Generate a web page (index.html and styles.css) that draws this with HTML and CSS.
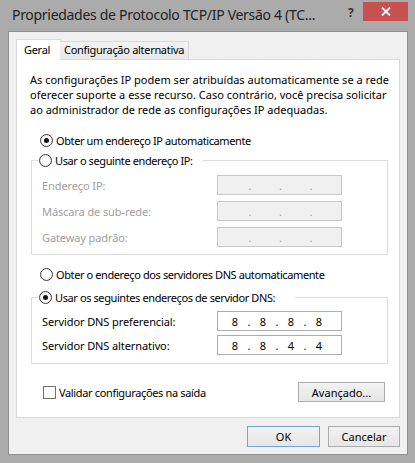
FILE: index.html
```html
<!DOCTYPE html>
<html lang="pt-BR">
<head>
<meta charset="utf-8">
<title>Propriedades de Protocolo TCP/IP Versão 4</title>
<link rel="stylesheet" href="styles.css">
</head>
<body>
<div class="window">
  <div class="titlebar">
    <div class="title">Propriedades de Protocolo TCP/IP Versão 4 (TC...</div>
    <div class="help">?</div>
    <div class="close">
      <svg width="10" height="9" viewBox="0 0 10 9"><path d="M1 0.5 L9 8.5 M9 0.5 L1 8.5" stroke="#fff" stroke-width="1.8" fill="none"/></svg>
    </div>
  </div>
  <div class="client">
    <div class="tabs">
      <div class="tab active">Geral</div>
      <div class="tab">Configuração alternativa</div>
    </div>
    <div class="panel">
      <p class="desc">As configurações IP podem ser atribuídas automaticamente se a rede<br>oferecer suporte a esse recurso. Caso contrário, você precisa solicitar<br>ao administrador de rede as configurações IP adequadas.</p>

      <div class="radio r-top"><span class="rb checked"></span><span>Obter um endereço IP automaticamente</span></div>

      <fieldset class="group g1">
        <legend><span class="radio"><span class="rb"></span><span>Usar o seguinte endereço IP:</span></span></legend>
        <div class="row"><span class="lbl disabled">Endereço IP:</span><div class="ip off"><span class="f"></span><span class="d">.</span><span class="f"></span><span class="d">.</span><span class="f"></span><span class="d">.</span><span class="f"></span></div></div>
        <div class="row"><span class="lbl disabled">Máscara de sub-rede:</span><div class="ip off"><span class="f"></span><span class="d">.</span><span class="f"></span><span class="d">.</span><span class="f"></span><span class="d">.</span><span class="f"></span></div></div>
        <div class="row"><span class="lbl disabled">Gateway padrão:</span><div class="ip off"><span class="f"></span><span class="d">.</span><span class="f"></span><span class="d">.</span><span class="f"></span><span class="d">.</span><span class="f"></span></div></div>
      </fieldset>

      <div class="radio r-dns"><span class="rb"></span><span>Obter o endereço dos servidores DNS automaticamente</span></div>

      <fieldset class="group g2">
        <legend><span class="radio"><span class="rb checked"></span><span>Usar os seguintes endereços de servidor DNS:</span></span></legend>
        <div class="row"><span class="lbl">Servidor DNS preferencial:</span><div class="ip"><span class="f">8</span><span class="d">.</span><span class="f">8</span><span class="d">.</span><span class="f">8</span><span class="d">.</span><span class="f">8</span></div></div>
        <div class="row"><span class="lbl">Servidor DNS alternativo:</span><div class="ip"><span class="f">8</span><span class="d">.</span><span class="f">8</span><span class="d">.</span><span class="f">4</span><span class="d">.</span><span class="f">4</span></div></div>
      </fieldset>

      <div class="bottom">
        <div class="check"><span class="cb"></span><span>Validar configurações na saída</span></div>
        <div class="btn adv">Avançado...</div>
      </div>
    </div>
    <div class="actions">
      <div class="btn ok">OK</div>
      <div class="btn cancel">Cancelar</div>
    </div>
  </div>
</div>
</body>
</html>
```

FILE: styles.css
```css
* { box-sizing: border-box; }
html, body { margin: 0; padding: 0; }
body {
  width: 415px;
  height: 463px;
  overflow: hidden;
  background: #ababab;
  font-family: "Noto Sans", "Open Sans", sans-serif;
  font-size: 11px;
  color: #000;
}
.window {
  width: 415px;
  height: 463px;
  background: #ababab;
  display: flex;
  flex-direction: column;
}
.titlebar {
  height: 31px;
  display: flex;
  align-items: flex-start;
}
.title {
  flex: 1;
  padding: 5px 0 0 12px;
  font-size: 14px;
  line-height: 20px;
  letter-spacing: -0.3px;
  color: #222;
  white-space: nowrap;
}
.help {
  margin-top: 5px;
  width: 10px;
  font-size: 12px;
  font-weight: bold;
  line-height: 16px;
  color: #333;
}
.close {
  width: 45px;
  height: 19px;
  margin: 2px 7px 0 5px;
  background: #c75050;
  display: flex;
  align-items: center;
  justify-content: center;
}
.client {
  flex: 1;
  margin: 0 7px 8px 8px;
  background: #f0f0f0;
  border: 1px solid #8f8f8f;
  padding: 7px 7px 7px 7px;
  display: flex;
  flex-direction: column;
}
.tabs {
  height: 20px;
  display: flex;
  align-items: flex-end;
  position: relative;
  z-index: 1;
  letter-spacing: -0.3px;
}
.tab {
  height: 18px;
  border: 1px solid #d9d9d9;
  border-bottom: none;
  background: linear-gradient(#f3f3f3, #e8e8e8);
  line-height: 16px;
  padding-left: 4px;
  white-space: nowrap;
}
.tab.active {
  width: 45px;
  height: 21px;
  margin-bottom: -1px;
  background: #fff;
  padding-left: 7px;
  line-height: 19px;
}
.tab:not(.active) {
  width: 129px;
  margin-left: -1px;
  border-left: none;
}
.panel {
  height: 359px;
  background: #fff;
  border: 1px solid #d9d9d9;
  padding: 12px 11px 0 13px;
}
.desc {
  margin: 0;
  line-height: 15px;
  white-space: nowrap;
}
.radio {
  display: flex;
  align-items: center;
  height: 16px;
  gap: 3px;
  white-space: nowrap;
  letter-spacing: -0.4px;
}
.r-top { margin: 15px 0 0 10px; }
.r-dns { margin: 11px 0 0 10px; }
.rb {
  width: 13px;
  height: 13px;
  border-radius: 50%;
  border: 1px solid #3a3a3a;
  background: radial-gradient(circle, #ffffff 40%, #e6e6e6 100%);
  position: relative;
  flex: none;
}
.rb.checked::after {
  content: "";
  position: absolute;
  left: 3px;
  top: 3px;
  width: 5px;
  height: 5px;
  border-radius: 50%;
  background: #111;
}
.group {
  margin: 4px 0 0 1px;
  border: 1px solid #dcdcdc;
  padding: 0 0 7px 6px;
  min-width: 0;
}
.group legend {
  padding: 0 10px 0 1px;
  background: #fff;
}
.g2 legend { padding-right: 20px; }
.group legend .radio { height: 17px; }
.g2 { margin-top: 7px; padding-bottom: 8px; }
.row {
  display: grid;
  grid-template-columns: 175px 125px;
  align-items: center;
  height: 20px;
  margin-left: 4px;
  margin-top: 6px;
}
.lbl { letter-spacing: -0.1px; }
.g2 .row { margin-top: 4px; }
.g2 .row:first-of-type { margin-top: 5px; }
.lbl.disabled { color: #a0a0a0; }
.ip {
  height: 20px;
  border: 1px solid #abadb3;
  background: #fff;
  display: flex;
  align-items: center;
  padding-left: 6px;
}
.ip.off {
  background: #f0f0f0;
  border-color: #c8c8c8;
  color: #a0a0a0;
  padding-left: 4.5px;
}
.ip .f {
  width: 22px;
  text-align: center;
}
.ip.off .f { width: 24.5px; }
.ip .d {
  width: 6px;
  text-align: center;
}
.bottom {
  margin: 18px 3px 0 13px;
  height: 20px;
  display: flex;
  align-items: center;
  justify-content: space-between;
}
.check {
  display: flex;
  align-items: center;
  gap: 3px;
  letter-spacing: -0.35px;
}
.cb {
  width: 13px;
  height: 13px;
  border: 1px solid #707070;
  background: #fff;
}
.btn {
  height: 20px;
  border: 1px solid #acacac;
  background: linear-gradient(#f2f2f2, #e6e6e6);
  display: flex;
  align-items: center;
  justify-content: center;
}
.adv { width: 87px; }
.actions {
  margin-top: 8px;
  display: flex;
  justify-content: flex-end;
  gap: 8px;
}
.ok {
  width: 73px;
  height: 21px;
  border-color: #6ea5dd;
}
.cancel {
  width: 72px;
  height: 21px;
}
```
